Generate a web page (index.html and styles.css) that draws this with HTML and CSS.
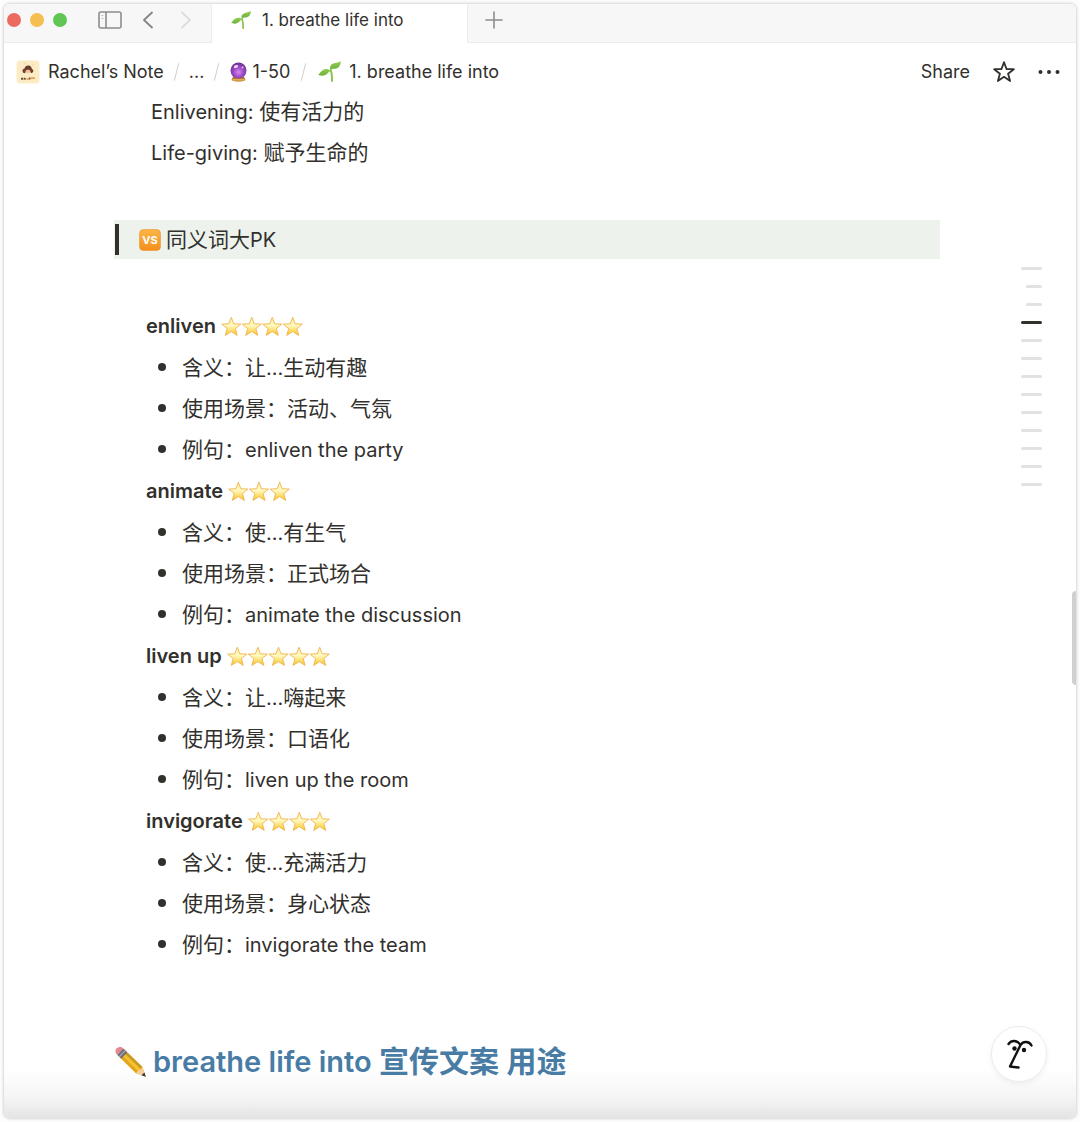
FILE: index.html
```html
<!DOCTYPE html>
<html lang="en">
<head>
    <meta charset="UTF-8">
    <meta name="viewport" content="width=device-width, initial-scale=1.0">
    <title>1. breathe life into</title>
    <link rel="stylesheet" href="styles.css">
</head>
<body>
    <!-- shared icons -->
    <svg class="defs" width="0" height="0" aria-hidden="true">
        <defs>
            <linearGradient id="star-fill" x1="0" y1="0" x2="0" y2="1">
                <stop offset="0" stop-color="#ffeea0"/>
                <stop offset="0.45" stop-color="#fff9c0"/>
                <stop offset="1" stop-color="#fbc41f"/>
            </linearGradient>
            <linearGradient id="vs-fill" x1="0" y1="0" x2="0" y2="1">
                <stop offset="0" stop-color="#fbb545"/>
                <stop offset="1" stop-color="#f48e1c"/>
            </linearGradient>
            <radialGradient id="ball-fill" cx="0.5" cy="0.6" r="0.6">
                <stop offset="0" stop-color="#d58af0"/>
                <stop offset="0.5" stop-color="#9f4bc8"/>
                <stop offset="1" stop-color="#6a2f92"/>
            </radialGradient>
            <linearGradient id="leaf-fill" x1="0" y1="0" x2="0" y2="1">
                <stop offset="0" stop-color="#93cd52"/>
                <stop offset="1" stop-color="#6ab238"/>
            </linearGradient>
            <symbol id="star" viewBox="0 0 24 24">
                <path d="M12 1.2 L14.9 8.8 L23.2 9.2 L16.8 14.4 L19 22.4 L12 17.9 L5 22.4 L7.2 14.4 L0.8 9.2 L9.1 8.8 Z" fill="url(#star-fill)" stroke="#edb04a" stroke-width="1" stroke-linejoin="round"/>
            </symbol>
            <symbol id="sprout" viewBox="0 0 24 24">
                <path d="M14.6 22 C14.8 17 14.2 13 13.2 10.5" fill="none" stroke="#86c34a" stroke-width="2" stroke-linecap="round"/>
                <path d="M13 10.6 C11.6 6 14.5 3.8 18 3.2 C20.5 2.7 22.4 2.2 23.8 1 C23.8 5.6 21.6 8.6 18 9 C15.8 9.2 14.2 8.8 13 10.6 Z" fill="url(#leaf-fill)"/>
                <path d="M13.2 11.6 C11 8.8 7.4 8.9 4.8 10.6 C2.4 12.1 2 14 0.2 15.4 C3.4 17 7.8 16.6 9.8 14.2 C10.8 12.9 11.6 12 13.2 11.6 Z" fill="url(#leaf-fill)"/>
            </symbol>
        </defs>
    </svg>

    <div class="window">
        <header class="tab-bar">
            <div class="window-controls">
                <span class="dot dot-red"></span>
                <span class="dot dot-yellow"></span>
                <span class="dot dot-green"></span>
                <button class="icon-btn btn-sidebar" aria-label="Toggle sidebar">
                    <svg width="24" height="18" viewBox="0 0 24 18" fill="none" stroke="#8c8c8c" stroke-width="1.6">
                        <rect x="1" y="1" width="22" height="16" rx="2"/>
                        <path d="M8 1 V17"/>
                        <path d="M3.4 4.5 H5.4 M3.4 7.5 H5.4" stroke="#bdbdbd" stroke-width="1"/>
                    </svg>
                </button>
                <button class="icon-btn btn-back" aria-label="Back">
                    <svg width="10" height="18" viewBox="0 0 10 18" fill="none" stroke="#858585" stroke-width="1.8" stroke-linecap="round" stroke-linejoin="round"><path d="M9 1.5 L1 9 L9 16.5"/></svg>
                </button>
                <button class="icon-btn btn-forward" aria-label="Forward">
                    <svg width="10" height="18" viewBox="0 0 10 18" fill="none" stroke="#dcdcdc" stroke-width="1.8" stroke-linecap="round" stroke-linejoin="round"><path d="M1 1.5 L9 9 L1 16.5"/></svg>
                </button>
            </div>
            <div class="tab">
                <svg width="20" height="20"><use href="#sprout"/></svg>
                <span>1. breathe life into</span>
            </div>
            <div class="tab-rest">
                <button class="icon-btn" aria-label="New tab">
                    <svg width="18" height="18" viewBox="0 0 18 18" fill="none" stroke="#8c8c8c" stroke-width="1.6" stroke-linecap="round"><path d="M9 1 V17 M1 9 H17"/></svg>
                </button>
            </div>
        </header>

        <div class="top-bar">
            <nav class="breadcrumb">
                <a href="#" class="crumb">
                    <svg class="avatar" width="24" height="24" viewBox="0 0 24 24">
                        <rect x="0.5" y="0.5" width="23" height="23" rx="4" fill="#fdebc6"/>
                        <path d="M7 12.5 C5.8 10.5 7 9 8.5 8.6 C9 6 11 5.3 12.5 5.6 C14.5 5.6 15.5 7.3 15.8 8.8 C17.8 9.8 17.8 12.2 16 13 C14.8 13.5 14.5 12 14 11 H10 C9.6 13 8.3 13.8 7 12.5 Z" fill="#6b3f2c"/>
                        <path d="M9.5 11 C10 9.4 14 9.4 14.3 11 C14.3 14 9.8 14 9.5 11 Z" fill="#f3bf98"/>
                        <path d="M5 18.8 H10 M13 18.5 H14.5" stroke="#66513c" stroke-width="2" stroke-dasharray="2 0.6"/>
                        <path d="M10.5 19 H12.8 M15 18.2 H19" stroke="#e9a14b" stroke-width="1.8"/>
                        <path d="M8 3.8 H8.8 M16.5 5 H17.3" stroke="#edbd7a" stroke-width="1"/>
                    </svg>
                    <span>Rachel’s Note</span>
                </a>
                <span class="slash"></span>
                <a href="#" class="crumb">...</a>
                <span class="slash"></span>
                <a href="#" class="crumb crumb-ball">
                    <svg width="17" height="20" viewBox="0 0 17 20">
                        <path d="M3 14.5 H14 L15.5 18 C13 20 4 20 1.5 18 Z" fill="#b9772f"/>
                        <path d="M2.5 17.8 H14.5" stroke="#edc163" stroke-width="1.3"/>
                        <circle cx="8.5" cy="8.5" r="8" fill="url(#ball-fill)"/>
                        <ellipse cx="6" cy="4.5" rx="2.3" ry="1.3" fill="#f2d9fb" transform="rotate(-25 6 4.5)"/>
                        <circle cx="12.5" cy="5.5" r="1" fill="#e6bdf5"/>
                    </svg>
                    <span>1-50</span>
                </a>
                <span class="slash"></span>
                <a href="#" class="crumb crumb-page">
                    <svg width="23" height="23"><use href="#sprout"/></svg>
                    <span>1. breathe life into</span>
                </a>
            </nav>
            <div class="actions">
                <button class="icon-btn share">Share</button>
                <button class="icon-btn" aria-label="Favorite">
                    <svg width="22" height="22" viewBox="0 0 22 22" fill="none" stroke="#32302c" stroke-width="1.8" stroke-linejoin="round"><path d="M11 1.2 L13.5 8 L20.8 8.2 L15.1 12.7 L17.1 20 L11 15.8 L4.9 20 L6.9 12.7 L1.2 8.2 L8.5 8 Z"/></svg>
                </button>
                <button class="icon-btn" aria-label="More">
                    <svg width="22" height="6" viewBox="0 0 22 6" fill="#32302c"><circle cx="2.5" cy="3" r="2"/><circle cx="11" cy="3" r="2"/><circle cx="19.5" cy="3" r="2"/></svg>
                </button>
            </div>
        </div>

        <main class="page">
            <div class="meanings">
                <p><span class="en">Enlivening: </span>使有活力的</p>
                <p><span class="en">Life-giving: </span>赋予生命的</p>
            </div>

            <blockquote class="callout">
                <svg width="22" height="22" viewBox="0 0 22 22" role="img" aria-label="versus">
                    <rect x="0.5" y="0.5" width="21" height="21" rx="4" fill="url(#vs-fill)" stroke="#ec962f" stroke-width="0.6"/>
                    <text x="11" y="15" class="vs-text">VS</text>
                </svg>
                <span>同义词大<span class="en">PK</span></span>
            </blockquote>

            <div class="words">
                <section class="word">
                    <h3>enliven <svg width="82" height="21" viewBox="0 0 96 24"><use href="#star" width="24" height="24"/><use href="#star" x="24" width="24" height="24"/><use href="#star" x="48" width="24" height="24"/><use href="#star" x="72" width="24" height="24"/></svg></h3>
                    <ul>
                        <li>含义：让<span class="en">...</span>生动有趣</li>
                        <li>使用场景：活动、气氛</li>
                        <li>例句：<span class="en">enliven the party</span></li>
                    </ul>
                </section>
                <section class="word">
                    <h3>animate <svg width="62" height="21" viewBox="0 0 72 24"><use href="#star" width="24" height="24"/><use href="#star" x="24" width="24" height="24"/><use href="#star" x="48" width="24" height="24"/></svg></h3>
                    <ul>
                        <li>含义：使<span class="en">...</span>有生气</li>
                        <li>使用场景：正式场合</li>
                        <li>例句：<span class="en">animate the discussion</span></li>
                    </ul>
                </section>
                <section class="word">
                    <h3>liven up <svg width="103" height="21" viewBox="0 0 120 24"><use href="#star" width="24" height="24"/><use href="#star" x="24" width="24" height="24"/><use href="#star" x="48" width="24" height="24"/><use href="#star" x="72" width="24" height="24"/><use href="#star" x="96" width="24" height="24"/></svg></h3>
                    <ul>
                        <li>含义：让<span class="en">...</span>嗨起来</li>
                        <li>使用场景：口语化</li>
                        <li>例句：<span class="en">liven up the room</span></li>
                    </ul>
                </section>
                <section class="word">
                    <h3>invigorate <svg width="82" height="21" viewBox="0 0 96 24"><use href="#star" width="24" height="24"/><use href="#star" x="24" width="24" height="24"/><use href="#star" x="48" width="24" height="24"/><use href="#star" x="72" width="24" height="24"/></svg></h3>
                    <ul>
                        <li>含义：使<span class="en">...</span>充满活力</li>
                        <li>使用场景：身心状态</li>
                        <li>例句：<span class="en">invigorate the team</span></li>
                    </ul>
                </section>
            </div>

            <h2 class="usage">
                <svg width="32" height="32" viewBox="0 0 32 32">
                    <path d="M8.5 2.8 L27.5 21 L30.8 30.8 L21 27.3 L2.5 9 Z" fill="#f6c22f"/>
                    <path d="M8.5 2.8 L27.5 21 L25.8 23 L6.6 4.8 Z" fill="#c99a22"/>
                    <path d="M4.6 6.8 L23.3 25.3 L21 27.3 L2.5 9 Z" fill="#e3a51e"/>
                    <path d="M27.5 21 L30.8 30.8 L21 27.3 L22.8 24.8 L25.3 23.8 Z" fill="#f2cf9b"/>
                    <path d="M30.8 30.8 L29.4 26.5 L26.5 29.2 Z" fill="#3a3530"/>
                    <path d="M8.2 2.6 L12.2 6.5 L6.2 12.7 L2.3 8.8 Z" fill="#6e6d7c"/>
                    <path d="M10.2 4.6 L4.3 10.7" stroke="#aaa8b8" stroke-width="1.3"/>
                    <path d="M8.2 2.4 C6 -0.2 1 1 0.5 4.3 C0.2 6 1 7.5 2.3 8.8 Z" fill="#e58890"/>
                </svg>
                <span><span class="usage-en">breathe life into </span>宣传文案 用途</span>
            </h2>
        </main>

        <div class="outline">
            <span></span>
            <span class="sub"></span>
            <span class="sub"></span>
            <span class="current"></span>
            <span></span>
            <span></span>
            <span></span>
            <span></span>
            <span></span>
            <span></span>
            <span></span>
            <span></span>
            <span></span>
        </div>
        <div class="scroll-thumb"></div>
        <button class="assistant" aria-label="Open assistant">
            <svg width="28" height="32" viewBox="0 0 28 32" fill="none" stroke="#111" stroke-width="2.4" stroke-linecap="round" stroke-linejoin="round">
                <path d="M3.5 6 C6.5 2 11.5 2.2 14.5 5.8"/>
                <path d="M26.5 7.5 C24 3.2 18.5 2.8 15.5 7 L5 28.5 L13.5 29.5"/>
                <circle cx="9.5" cy="10.5" r="2.2" fill="#111" stroke="none"/>
                <circle cx="19" cy="12" r="2.2" fill="#111" stroke="none"/>
            </svg>
        </button>
    </div>
</body>
</html>
```
FILE: styles.css
```css
* {
    box-sizing: border-box;
}

body {
    margin: 0;
    padding: 4px;
    background: #fdfdfd;
    color: #32302c;
    font-family: Inter, "Noto Sans CJK SC", sans-serif;
    font-size: 18px;
}

h2, h3, p, ul, blockquote {
    margin: 0;
    padding: 0;
}

.defs {
    position: absolute;
}

.window {
    position: relative;
    min-height: calc(100vh - 8px);
    overflow: hidden;
    border-radius: 6px;
    background: linear-gradient(to top, #e4e4e4, #f5f5f5 20px, #fff 50px);
    box-shadow: 0 0 3px 1px rgba(0,0,0,0.16);
}

.icon-btn {
    display: flex;
    align-items: center;
    padding: 0;
    border: none;
    background: none;
    color: inherit;
    font: inherit;
    cursor: pointer;
}

/* tabs */
.tab-bar {
    display: flex;
    height: 39px;
    background: #f7f7f7;
}

.window-controls {
    display: flex;
    align-items: center;
    width: 208px;
    padding: 0 20px 7px 3px;
    border-right: 1px solid #ececec;
    border-bottom: 1px solid #ececec;
}

.dot {
    width: 14px;
    height: 14px;
    margin-right: 9px;
    border-radius: 50%;
}

.dot-red {
    background: #ec6a5f;
}

.dot-yellow {
    background: #f4be50;
}

.dot-green {
    background: #61c655;
}

.btn-sidebar {
    margin-left: 22px;
}

.btn-back {
    margin-left: 21px;
}

.btn-forward {
    margin-left: 28px;
}

.tab {
    display: flex;
    align-items: center;
    gap: 11px;
    width: 255px;
    padding: 0 19px 7px;
    background: #fff;
    font-size: 17px;
}

.tab-rest {
    display: flex;
    flex: 1;
    align-items: center;
    padding: 0 17px 7px;
    border-left: 1px solid #ececec;
    border-bottom: 1px solid #ececec;
}

/* breadcrumb */
.top-bar {
    display: flex;
    align-items: center;
    justify-content: space-between;
    height: 49px;
    padding: 8px 16px 0 12px;
}

.breadcrumb, .actions, .crumb {
    display: flex;
    align-items: center;
}

.crumb {
    gap: 8px;
    color: inherit;
    text-decoration: none;
}

.crumb-ball {
    gap: 5px;
    padding: 0 1px;
}

.crumb-page {
    padding-left: 2px;
}

.slash {
    width: 1px;
    height: 18px;
    margin: 0 12px;
    background: #cfcecb;
    transform: rotate(14deg);
}

.actions {
    gap: 23px;
}

/* page content */
.page {
    max-width: 936px;
    padding: 0 0 34px 110px;
    font-size: 21px;
}

.en {
    font-size: 20px;
}

.meanings {
    padding-left: 37px;
}

.meanings p {
    height: 41px;
    line-height: 40px;
}

.callout {
    display: flex;
    align-items: center;
    gap: 5px;
    height: 39px;
    margin-top: 46px;
    padding-left: 25px;
    background: #edf3ec;
    line-height: 38px;
}

.callout::before {
    content: "";
    width: 4px;
    height: 31px;
    margin: 0 15px 0 -24px;
    background: #32302c;
}

.vs-text {
    fill: #fff;
    font-size: 11px;
    font-weight: 700;
    text-anchor: middle;
}

.words {
    margin-top: 47px;
    padding-left: 32px;
}

.word {
    margin-bottom: 1px;
}

.word h3 {
    height: 41px;
    font-size: 20px;
    font-weight: 600;
    line-height: 41px;
}

.word h3 svg {
    vertical-align: -4px;
}

.word ul {
    list-style: none;
}

.word li {
    height: 41px;
    padding-left: 12px;
    line-height: 41px;
}

.word li::before {
    content: "";
    display: inline-block;
    width: 8px;
    height: 8px;
    margin-right: 16px;
    border-radius: 50%;
    background: #32302c;
    vertical-align: 4px;
}

.usage {
    display: flex;
    align-items: center;
    gap: 6px;
    margin-top: 74px;
    padding-left: 1px;
    color: #487ca5;
    font-size: 30px;
    font-weight: 600;
    line-height: 44px;
}

.usage-en {
    font-size: 29px;
}

/* things floating over the page */
.outline {
    position: absolute;
    top: 263px;
    right: 34px;
    display: flex;
    flex-direction: column;
    align-items: flex-end;
    gap: 15px;
}

.outline span {
    width: 21px;
    height: 3px;
    border-radius: 2px;
    background: #e3e2e0;
}

.outline .sub {
    width: 16px;
}

.outline .current {
    background: #32302c;
}

.scroll-thumb {
    position: absolute;
    top: 587px;
    right: 0;
    width: 4px;
    height: 94px;
    border-radius: 4px 0 0 4px;
    background: #d0d0d0;
}

.assistant {
    position: absolute;
    right: 29px;
    bottom: 36px;
    display: flex;
    align-items: center;
    justify-content: center;
    width: 56px;
    height: 56px;
    padding: 0;
    border: 1px solid #ececec;
    border-radius: 50%;
    background: #fff;
    box-shadow: 0 2px 6px rgba(0,0,0,0.06);
    cursor: pointer;
}
```
